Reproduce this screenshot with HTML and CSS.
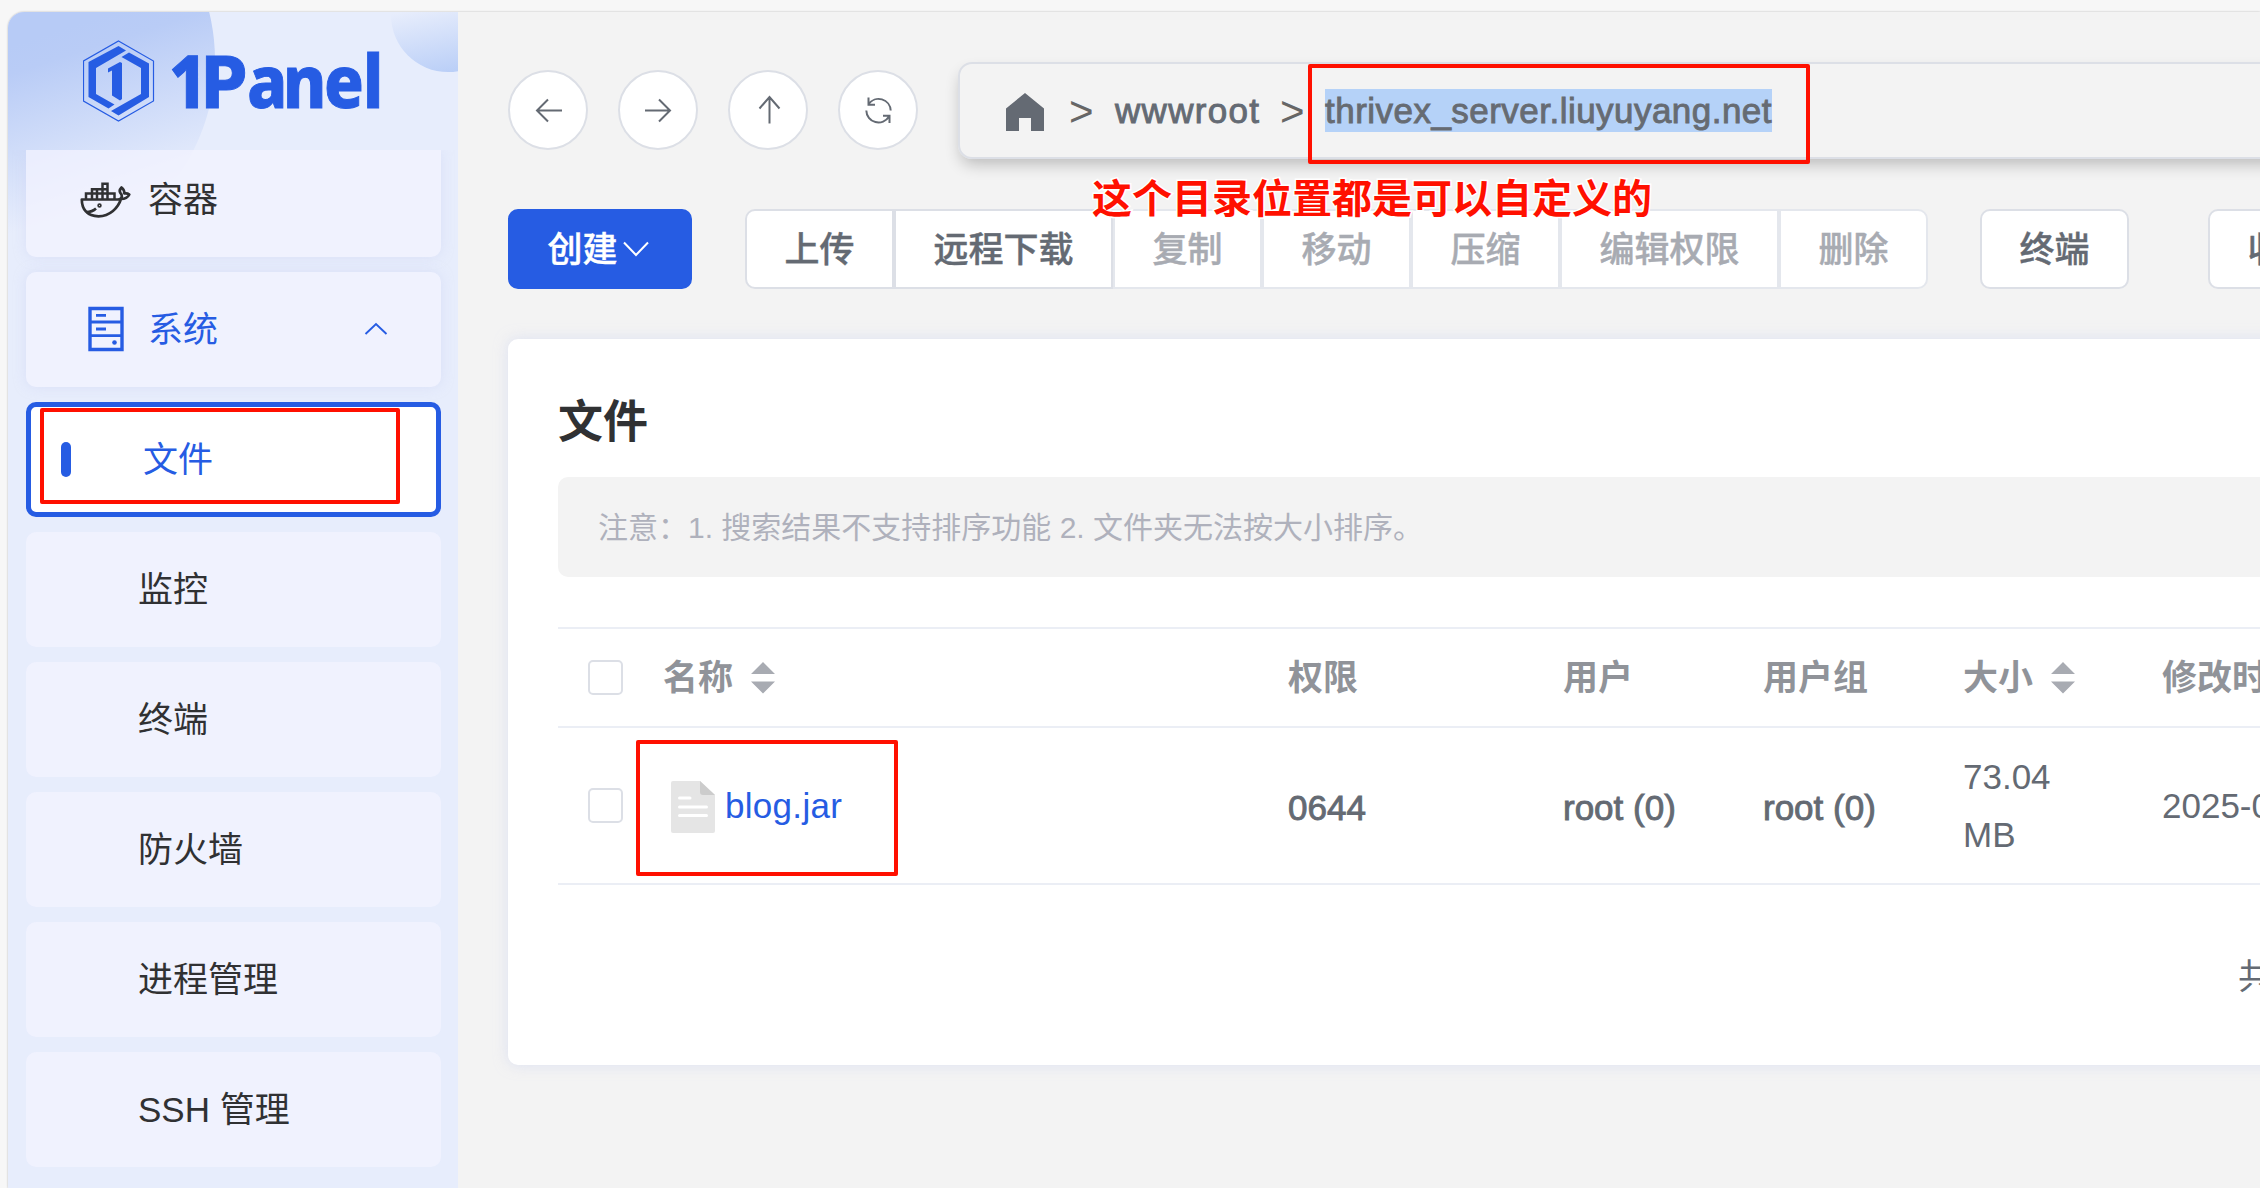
FILE: index.html
```
<!DOCTYPE html>
<html lang="zh-CN">
<head>
<meta charset="utf-8">
<title>1Panel</title>
<link rel="stylesheet" href="styles.css">
</head>
<body>
<div class="app">
  <aside class="sidebar">
    <svg class="sidebar-bg" width="450" height="260" viewBox="0 0 450 260">
      <defs>
        <linearGradient id="orb" gradientUnits="userSpaceOnUse" x1="45" y1="20" x2="100" y2="190"><stop offset="0" stop-color="#b7cbf6"/><stop offset="0.15" stop-color="#b9ccf6"/><stop offset="1" stop-color="#e7edfc"/></linearGradient>
        <linearGradient id="orb2" x1="0.4" y1="0" x2="0.6" y2="1"><stop offset="0.4" stop-color="#e7edfc"/><stop offset="1" stop-color="#b9cef7"/></linearGradient>
      </defs>
      <circle cx="7" cy="48" r="200" fill="url(#orb)"/>
      <circle cx="440" cy="3" r="57" fill="url(#orb2)"/>
    </svg>
    <div class="logo">
      <svg width="310" height="90" viewBox="0 0 310 90">
        <g fill="none" stroke="#265ce3"><path stroke-width="1.2" d="M35.500 6 70.500 26v40l-35 20-35-20V26z"/></g>
        <g fill="#265ce3">
          <path d="M35.500 11 43 15.500 13 33v26l18.500 10.500-6 4L5.500 62V27z"/>
          <path d="M46 17.500 66 28.500V62L35.500 80.500 28 76 58 59V33L38.500 22z"/>
          <path d="M25 33.500 37 27l2 1v36l-2 1.500-8-5V35.500l-4 2z"/>
        </g>
        <text class="logo-text" transform="scale(.9 1)" x="95.6" y="73" dx="0 -7.300 0 -4.700 -2.700 -1">1<tspan class="logo-p">P</tspan>anel</text>
      </svg>
    </div>
    <nav class="menu">
      <div class="item item-cut">
        <svg class="ico-whale" width="52" height="36" viewBox="0 0 52 36" fill="none" stroke="#303133">
          <path d="M1.800 17.500H37.500c3.500 0 5-2.500 4-5-2.500-2.500-2-5 0-7 2.200 1.800 3 4 2.800 6 2-.5 3.700 0 5 1-1.500 3-4 4.500-8.300 4.500C38 26 30 34.300 18.500 34.300 7 34.300 1.800 27 1.800 17.500z" stroke-linejoin="round" stroke-width="2.700"/>
          <path d="M6 17v-5.500h28.500V17M12 11.500V7.200h15.500M22.500 17V1.800h5V17M12 11.500V17M17 7.200V17M6 30c4.500 0 8-1.500 10-3.500" stroke-width="2.500"/><circle cx="19.500" cy="23.500" r="1.400" stroke-width="1.700"/>
        </svg>
        <span class="label">容器</span>
      </div>
      <div class="item item-open">
        <svg class="ico-server" width="36" height="46" viewBox="0 0 36 46" fill="none" stroke="#265ce3">
          <path stroke-width="3.400" d="M2 2.500h32v41H2z"/><path stroke-width="2.800" d="M2 16h32M2 29.700h32M8 9.300h10M8 23h10"/><circle cx="26.500" cy="36.500" r="2.300" fill="#265ce3" stroke="none"/>
        </svg>
        <span class="label">系统</span>
        <svg class="chevron" width="24" height="14" viewBox="0 0 24 14" fill="none" stroke="#265ce3" stroke-width="1.900"><path d="M1.500 12 12 2l10.500 10"/></svg>
      </div>
      <div class="item item-active"><i class="bar"></i><span class="label">文件</span></div>
      <div class="item sub">监控</div>
      <div class="item sub">终端</div>
      <div class="item sub">防火墙</div>
      <div class="item sub">进程管理</div>
      <div class="item sub">SSH 管理</div>
    </nav>
  </aside>
  <main class="main">
    <div class="path-row">
      <button class="round"><svg width="30" height="30" viewBox="0 0 30 30"><path d="M29 15.500H3.500M15 4.500 4 15.500 15 26.500"/></svg></button>
      <button class="round"><svg width="30" height="30" viewBox="0 0 30 30"><path d="M2 15.500h25.500M16 4.500l11 11-11 11"/></svg></button>
      <button class="round"><svg width="30" height="30" viewBox="0 0 30 30"><path d="M16.500 28.500V2M6.500 13.500 16.500 2l10 11.500"/></svg></button>
      <button class="round"><svg width="30" height="30" viewBox="0 0 30 30"><path d="M5.500 2.500v7.200H12M26.500 28v-7.200H20M5.600 9A12.200 12.200 0 0 1 27.700 15.500M3.300 15.500A12.200 12.200 0 0 0 26 21.500"/></svg></button>
      <div class="crumbs">
        <svg class="home" width="38" height="38" viewBox="0 0 38 38"><path fill="#646a73" d="M19 0 38 15.500V38H25V25H13v13H0V15.500z"/></svg>
        <span class="sep">&gt;</span><span class="crumb">wwwroot</span><span class="sep sep-2">&gt;</span><span class="crumb crumb-selected">thrivex_server.liuyuyang.net</span>
      </div>
    </div>
    <div class="toolbar">
      <button class="btn primary">创建<svg width="26" height="16" viewBox="0 0 26 16" fill="none" stroke="#fff" stroke-width="2"><path d="M1 1.500 13 14 25 1.500"/></svg></button>
      <div class="group">
        <button class="btn">上传</button><button class="btn wide">远程下载</button><button class="btn off">复制</button><button class="btn off">移动</button><button class="btn off">压缩</button><button class="btn off wide">编辑权限</button><button class="btn off">删除</button>
      </div>
      <button class="btn solo">终端</button>
      <button class="btn solo last">收藏夹</button>
    </div>
    <section class="card">
      <h1>文件</h1>
      <div class="notice">注意：1. 搜索结果不支持排序功能 2. 文件夹无法按大小排序。</div>
      <div class="table">
        <div class="row head">
          <div><i class="check"></i></div>
          <div>名称<svg class="sort" width="24" height="32" viewBox="0 0 24 32"><path d="M12 0 24 12H0zM0 19.500h24L12 31.500z"/></svg></div>
          <div>权限</div><div>用户</div><div>用户组</div>
          <div>大小<svg class="sort" width="24" height="32" viewBox="0 0 24 32"><path d="M12 0 24 12H0zM0 19.500h24L12 31.500z"/></svg></div>
          <div>修改时间</div>
        </div>
        <div class="row body">
          <div><i class="check"></i></div>
          <div class="file"><svg width="44" height="52" viewBox="0 0 44 52"><path fill="#e5e5e5" d="M2 0h27l15 14v36q0 2-2 2H2q-2 0-2-2V2q0-2 2-2z"/><path fill="#ccc" d="M29 0l15 14H32q-3 0-3-3z"/><path stroke="#fff" stroke-width="3" stroke-linecap="round" d="M8.500 17h10.500M8.500 26h27M8.500 34.500h27"/></svg><a>blog.jar</a></div>
          <div class="medium">0644</div><div class="medium">root (0)</div><div class="medium">root (0)</div>
          <div class="size">73.04 MB</div><div>2025-01-01</div>
        </div>
      </div>
      <div class="pager">共 1 条</div>
    </section>
  </main>
</div>
<div class="mark mark-menu"></div>
<div class="mark mark-path"></div>
<div class="mark mark-file"></div>
<div class="note">这个目录位置都是可以自定义的</div>
</body>
</html>
```
FILE: styles.css
```
* { box-sizing: border-box; }
html, body { margin: 0; width: 2260px; height: 1188px; overflow: hidden; }
body { position: relative; background: #f7f7f7; font: 35px/1 "Liberation Sans", "Noto Sans CJK SC", sans-serif; color: #646a73; padding: 12px 0 0 8px; white-space: nowrap; }
.app { display: flex; height: 1176px; width: 2252px; background: #f3f3f3; border-radius: 16px 0 0 0; overflow: hidden; box-shadow: 0 0 2px rgba(0,0,0,.3); }

.sidebar { position: relative; flex: 0 0 450px; background: #e7edfc; overflow: hidden; display: flex; flex-direction: column; }
.sidebar-bg { position: absolute; left: 0; top: 0; }
.logo { position: relative; height: 138px; padding: 23px 0 0 75px; }
.logo svg { display: block; }
.logo-text { font: 800 73px "Noto Sans", "Open Sans", sans-serif; fill: #265ce3; stroke: #265ce3; stroke-width: 1px; }
.logo-p { font: 700 71px "DejaVu Sans", sans-serif; }
.menu { position: relative; flex: 1; padding: 0 17px 0 18px; display: flex; flex-direction: column; gap: 15px; overflow: hidden; color: #303133; }
.item { flex: 0 0 115px; display: flex; align-items: center; border-radius: 10px; background: rgba(243,243,255,.75); box-shadow: 0 0 12px rgba(205,212,245,.5); }
.item-cut { flex-basis: 107px; border-radius: 0 0 10px 10px; padding: 0 0 8px 54px; }
.item-cut .label { margin-left: 16px; }
.item-open { padding-left: 62px; color: #265ce3; }
.item-open .label { margin-left: 24px; }
.ico-server { margin-top: -2px; }
.chevron { margin: -2px 0 0 auto; position: relative; right: 53px; }
.item-active { background: #fff; border: 5px solid #265ce3; color: #265ce3; padding-left: 30px; box-shadow: none; }
.bar { width: 10px; height: 35px; border-radius: 5px; background: #265ce3; }
.item-active .label { margin-left: 72px; }
.sub { padding-left: 112px; box-shadow: none; }

.main { flex: 1; min-width: 0; padding: 50px 0 0 50px; overflow: hidden; display: flex; flex-direction: column; }
.path-row { display: flex; align-items: flex-start; flex: 0 0 97px; }
.round { flex: 0 0 80px; height: 80px; margin: 8px 30px 0 0; padding: 0; border-radius: 50%; border: 2px solid #dcdfe6; background: #fff; display: flex; align-items: center; justify-content: center; }
.round svg { fill: none; stroke: #646a73; stroke-width: 2; }
.round + .crumbs { margin-left: 10px; }
.crumbs { flex: 0 0 1400px; height: 97px; border: 2px solid #dcdfe6; border-radius: 14px; box-shadow: 0 8px 16px -3px rgba(0,0,0,.24); display: flex; align-items: center; padding-left: 46px; padding-bottom: 1px; }
.home { margin-top: 4px; }
.sep { width: 26px; margin: 3px 20px 0 25px; color: #666; font-size: 42px; }
.sep-2 { margin: 3px 19px 0 19px; }
.crumb, .medium { -webkit-text-stroke: .9px currentColor; }
.crumb { width: 146px; letter-spacing: 1.3px; }
.crumb-selected { width: 447px; letter-spacing: .47px; background: #b5d2f8; height: 43px; line-height: 43px; color: #666b72; }

.toolbar { display: flex; flex: 0 0 80px; margin-top: 50px; }
.btn { flex: 0 0 149px; height: 80px; padding: 0; margin: 0; border: 2px solid #dcdfe6; border-radius: 10px; background: #fff; color: #646a73; font: 500 35px/1 "Liberation Sans", "Noto Sans CJK SC", sans-serif; display: flex; align-items: center; justify-content: center; -webkit-text-stroke: .4px currentColor; }
.primary { flex-basis: 184px; padding-right: 4px; background: #265ce3; border-color: #265ce3; color: #fff; }
.primary svg { margin: 0 0 0 5px; }
.group { display: flex; margin: 0 52px 0 53px; }
.group .btn { border-radius: 0; }
.group .btn:first-child { border-radius: 10px 0 0 10px; }
.group .btn:last-child { border-radius: 0 10px 10px 0; }
.group .wide, .wide { flex-basis: 219px; }
.group .off { color: #a8abb2; border-color: #e4e7ed; }
.last { flex-basis: 184px; margin-left: 79px; }

.card { flex: 0 0 726px; width: 1900px; margin-top: 50px; padding: 0 50px; background: #fff; border-radius: 10px; box-shadow: 0 0 14px rgba(205,212,240,.6); }
h1 { margin: 0; height: 138px; padding-top: 61px; font: 700 45px/1 "Liberation Sans", "Noto Sans CJK SC", sans-serif; color: #303133; }
.notice { height: 100px; padding-left: 40px; border-radius: 10px; background: #f3f3f3; font-size: 30px; line-height: 102px; color: #afb1bc; }
.table { margin-top: 50px; border-top: 2px solid #ebeef5; }
.row { display: grid; grid-template-columns: 105px 625px 275px 200px 200px 199px 300px; align-items: center; border-bottom: 2px solid #ebeef5; }
.row > div:first-child { padding-left: 30px; }
.head { height: 99px; color: #909399; font-weight: 700; }
.body { height: 157px; }
.check { display: block; width: 35px; height: 35px; border: 2px solid #dcdfe6; border-radius: 5px; }
.sort { margin-left: 18px; vertical-align: -4px; fill: #a8abb2; }
.file { display: flex; align-items: center; padding-left: 8px; color: #265ce3; }
.file svg { margin-top: 3px; }
.file a { margin-left: 10px; letter-spacing: .3px; }
.medium { padding-top: 4px; }
.size { width: 120px; line-height: 57.500px; white-space: normal; }
.pager { margin: 74px 0 0 1680px; }

.mark { position: absolute; border: 4px solid #ff1000; border-radius: 2px; }
.mark-menu { left: 40px; top: 408px; width: 360px; height: 96px; }
.mark-path { left: 1308px; top: 64px; width: 502px; height: 100px; }
.mark-file { left: 636px; top: 740px; width: 262px; height: 136px; }
.note { position: absolute; left: 1092px; top: 176px; font: 700 40px/1 "Noto Sans CJK SC", sans-serif; color: #ff1000; -webkit-text-stroke: 3px #fff; paint-order: stroke fill; }
```
